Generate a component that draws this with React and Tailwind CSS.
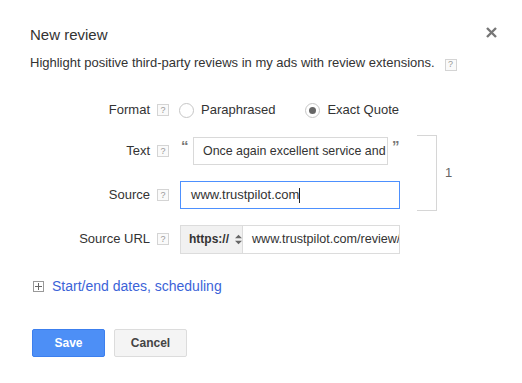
import React from 'react';

const Help = () => (
    <span className="inline-flex items-center justify-center w-[12px] h-[12px] border border-[#d4d4d4] bg-[#fafafa] text-[9px] leading-none text-[#999] ml-[7px] shrink-0">?</span>
);

const Label = ({ children }) => (
    <div className="flex items-center shrink-0">
        <span className="w-[120px] text-right text-[13px] text-[#333]">{children}</span>
        <Help />
    </div>
);

const Radio = ({ checked }) => (
    <span className="inline-flex items-center justify-center w-[15px] h-[15px] rounded-full border border-[#c6c6c6] bg-white shrink-0">
        {checked && <span className="w-[7px] h-[7px] rounded-full bg-[#666]"></span>}
    </span>
);

const App = () => {
    return (
        <div className="w-[522px] h-[383px] bg-white font-['Liberation_Sans',Arial,sans-serif] text-[#333] overflow-hidden">
            {/* Header */}
            <div className="flex items-center justify-between pl-[30px] pr-[25px] pt-[26px]">
                <h1 className="text-[15px] leading-[18px] text-[#333]">New review</h1>
                <svg width="11" height="11" viewBox="0 0 11 11" className="mt-[-6px]">
                    <path d="M1 1 L10 10 M10 1 L1 10" stroke="#777" strokeWidth="2.4" />
                </svg>
            </div>
            <div className="flex items-center pl-[30px] mt-[11px] text-[13px] leading-[16px]">
                <span>Highlight positive third-party reviews in my ads with review extensions.</span>
                <span className="ml-[3px]"><Help /></span>
            </div>

            {/* Format */}
            <div className="flex items-center pl-[30px] mt-[29px] h-[20px]">
                <Label>Format</Label>
                <div className="flex items-center ml-[10px] text-[13px]">
                    <Radio />
                    <span className="ml-[7px]">Paraphrased</span>
                    <span className="ml-[30px]"><Radio checked /></span>
                    <span className="ml-[7px]">Exact Quote</span>
                </div>
            </div>

            {/* Text + Source */}
            <div className="flex items-stretch pl-[30px] mt-[15px]">
                <div className="flex flex-col gap-[16px] py-[2px]">
                    <div className="flex items-center h-[28px]">
                        <Label>Text</Label>
                        <div className="flex items-start h-full ml-[11px]">
                            <span className="text-[15px] font-bold leading-none text-[#777] mt-[1px] ml-[1px] w-[12px]">“</span>
                            <div className="w-[195px] h-[28px] border border-[#d9d9d9] flex items-center pl-[9px] text-[12.4px] overflow-hidden whitespace-nowrap">
                                Once again excellent service and
                            </div>
                            <span className="text-[15px] font-bold leading-none text-[#777] mt-[1px] ml-[4px] w-[7px]">”</span>
                        </div>
                    </div>
                    <div className="flex items-center h-[28px]">
                        <Label>Source</Label>
                        <div className="ml-[11px] w-[220px] h-[28px] border border-[#4d90fe] flex items-center pl-[10px] text-[13px]">
                            www.trustpilot.com<span className="w-[1px] h-[15px] bg-[#222]"></span>
                        </div>
                    </div>
                </div>
                <div className="ml-[17px] w-[20px] border-t border-r border-b border-[#d6d6d6]"></div>
                <div className="flex items-center ml-[8px] text-[13px] text-[#666]">1</div>
            </div>

            {/* Source URL */}
            <div className="flex items-center pl-[30px] mt-[14px] h-[28px]">
                <Label>Source URL</Label>
                <div className="flex ml-[11px] h-[29px]">
                    <div className="w-[63px] h-full bg-[#f1f1f1] border border-[#dcdcdc] flex items-center pl-[8px] text-[12px] font-bold text-[#333]">
                        https://
                        <svg width="8" height="11" viewBox="0 0 8 11" className="ml-[6px]">
                            <path d="M4 0 L8 4 H0 Z M0 7 H8 L4 11 Z" fill="#666" />
                        </svg>
                    </div>
                    <div className="w-[157px] h-full border border-l-0 border-[#dcdcdc] flex items-center pl-[9px] text-[12.6px] overflow-hidden whitespace-nowrap">
                        www.trustpilot.com/review/
                    </div>
                </div>
            </div>

            {/* Link */}
            <div className="flex items-center pl-[33px] mt-[25px] h-[16px]">
                <span className="w-[11px] h-[11px] border border-[#999] flex items-center justify-center">
                    <svg width="7" height="7" viewBox="0 0 7 7">
                        <path d="M3.5 0 V7 M0 3.5 H7" stroke="#666" strokeWidth="1" />
                    </svg>
                </span>
                <span className="ml-[8px] text-[14px] text-[#3b63d8]">Start/end dates, scheduling</span>
            </div>

            {/* Buttons */}
            <div className="flex items-center pl-[32px] mt-[35px] gap-[9px]">
                <button className="w-[73px] h-[28px] rounded-[2px] bg-[#4d8ff6] border border-[#3c7fee] text-white text-[12px] font-bold">Save</button>
                <button className="w-[73px] h-[28px] rounded-[2px] bg-[#f4f4f4] border border-[#dcdcdc] text-[#444] text-[12px] font-bold">Cancel</button>
            </div>
        </div>
    );
};

export default App;
